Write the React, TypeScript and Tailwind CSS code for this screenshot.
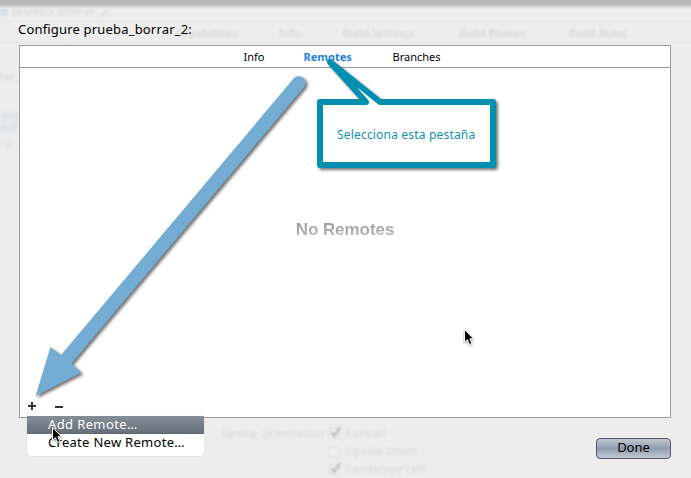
import React from "react";

function Cursor({ className }: { className: string }) {
  return (
    <svg className={className} width="14" height="20" viewBox="0 0 14 20">
      <path
        d="M1.5 1.5V14.2L4.3 11.6L6.6 16.6L9 15.5L6.8 10.8H10.6Z"
        fill="#000"
        stroke="#fff"
        strokeWidth="1"
        className="drop-shadow-[0_1px_1px_rgba(0,0,0,0.4)]"
      />
    </svg>
  );
}

function GhostCheck({ label, checked }: { label: string; checked: boolean }) {
  return (
    <div className="flex h-[18px] items-center gap-[4px]">
      <svg width="13" height="18" viewBox="0 0 13 18">
        <rect x=".5" y="4.5" width="10" height="10" rx="1.5" fill="#f0f0f0" stroke="#dadada" />
        {checked && <path d="M2.5 8L5.5 12L11 3" fill="none" stroke="#b4b4b4" strokeWidth="2" />}
      </svg>
      <span>{label}</span>
    </div>
  );
}

function BackgroundWindow() {
  return (
    <div className="absolute inset-0 flex flex-col overflow-hidden text-[11px] text-[#d8d8d8]">
      <div className="flex h-[21px] shrink-0 items-center gap-[5px] blur-[1px]">
        <span className="h-[13px] w-[7px] bg-[#d5e1e8]" />
        <span className="text-[12px] leading-[18px] tracking-[0.15px]">prueba_borrar_2</span>
      </div>
      <div className="flex h-[22px] shrink-0 items-center border-y border-[#e7e7e7] pt-[2px] pl-[176px] font-semibold tracking-[-0.1px]">
        <span className="w-[103px] blur-[1px]">Capabilities</span>
        <span className="w-[63px] blur-[1px]">Info</span>
        <span className="w-[117px] blur-[1px]">Build Settings</span>
        <span className="w-[110px] blur-[1px]">Build Phases</span>
        <span className="blur-[1px]">Build Rules</span>
      </div>
      <div className="flex flex-1">
        <div className="flex w-[67px] flex-col border-r border-[#e9e9e9] pt-[24px] leading-[18px]">
          <span className="blur-[1px]">rar_</span>
          <span className="mt-[27px] h-[20px] w-[19px] bg-[#e2e5e8] text-[#f2f2f2] blur-[1px]">rar_</span>
          <span className="mt-[2px] blur-[1px]">rar_</span>
        </div>
        <div className="flex flex-1 items-start gap-[9px] pt-[381px] pl-[154px] text-[#d6d6d6] blur-[1px]">
          <span className="w-[99px] leading-[18px] tracking-[0.4px] whitespace-nowrap">Device Orientation</span>
          <div className="tracking-[0.2px]">
            <GhostCheck label="Portrait" checked />
            <GhostCheck label="Upside Down" checked={false} />
            <GhostCheck label="Landscape Left" checked />
          </div>
        </div>
      </div>
      <div className="absolute inset-x-0 top-0 h-[9px] bg-linear-to-b from-[#b5b5b5] via-[#bdbdbd] to-[#ededed]" />
    </div>
  );
}

function Annotations() {
  return (
    <svg
      className="pointer-events-none absolute inset-0 drop-shadow-[2px_2px_1.5px_rgba(0,0,0,0.55)]"
      width="691"
      height="478"
      viewBox="0 0 691 478"
    >
      <path
        d="M294.2 77.8A6.8 6.8 0 0 1 304.5 86.5L71.5 363.5L81.5 372.5L35.5 396L50.5 347L61 355Z"
        fill="#74add3"
      />
      <path
        d="M320 102H366L330 62L380 102H493V165H320Z"
        fill="#fff"
        stroke="#008fb1"
        strokeWidth="6"
        strokeLinejoin="round"
      />
    </svg>
  );
}

function ContextMenu() {
  return (
    <div className="absolute top-[412px] left-[27px] h-[44px] w-[177px] rounded-[4px] bg-white pt-[4px] text-[13px] leading-[16px] tracking-[0.29px] shadow-[0_0_1px_rgba(0,0,0,0.3)]">
      <div className="h-[18px] border-b border-[#5f6870] bg-linear-to-b from-[#858e97] to-[#67717a] pl-[21px] leading-[17px] tracking-[0.38px] text-white">
        Add Remote…
      </div>
      <div className="h-[18px] pl-[21px]">Create New Remote…</div>
    </div>
  );
}

export default function App() {
  return (
    <div className="relative h-[478px] w-[691px] overflow-hidden bg-[#ededed] font-['Noto_Sans',sans-serif] text-black">
      <BackgroundWindow />
      <main className="relative flex h-full flex-col pt-[20px] pr-[20px] pl-[19px]">
        <h1 className="-ml-px h-[25px] text-[13px] leading-[19px] tracking-[0.18px]">Configure prueba_borrar_2:</h1>
        <section className="flex h-[373px] w-[652px] shrink-0 flex-col border border-[#999] bg-white">
          <nav className="flex h-[22px] shrink-0 border-b border-[#999] pl-[223.5px] text-[11px] leading-[22px]">
            <span className="w-[60px]">Info</span>
            <span className="w-[89px] font-bold text-[#1c83d9]">Remotes</span>
            <span>Branches</span>
          </nav>
          <div className="flex flex-1 justify-center pt-[152px] font-['Liberation_Sans',sans-serif] text-[17px] leading-[20px] font-bold tracking-[-0.05px]">
            <span className="h-[20px] bg-linear-to-b from-[#969696] to-[#c0c0c0] bg-clip-text text-transparent">No Remotes</span>
          </div>
          <div className="flex h-[22px] shrink-0 items-center gap-[19px] pl-[8px]">
            <svg width="8" height="8" viewBox="0 0 8 8">
              <path d="M4 0V8M0 4H8" stroke="#333" strokeWidth="2" />
            </svg>
            <svg width="8" height="8" viewBox="0 0 8 8">
              <path d="M0 5H8" stroke="#333" strokeWidth="2" />
            </svg>
          </div>
        </section>
        <button className="mt-[20px] h-[21px] w-[75px] self-end rounded-[4px] border border-[#54556f] bg-linear-to-b from-[#c2c8d1] via-[#909daf] to-[#c0cad6] pb-[2px] text-[13px] leading-[17px]">
          Done
        </button>
      </main>
      <Annotations />
      <span className="absolute top-[127px] left-[337px] text-[12px] leading-[16px] tracking-[0.18px] whitespace-nowrap text-[#118fac]">
        Selecciona esta pestaña
      </span>
      <ContextMenu />
      <Cursor className="absolute top-[426px] left-[51px]" />
      <Cursor className="absolute top-[328px] left-[463px]" />
    </div>
  );
}
